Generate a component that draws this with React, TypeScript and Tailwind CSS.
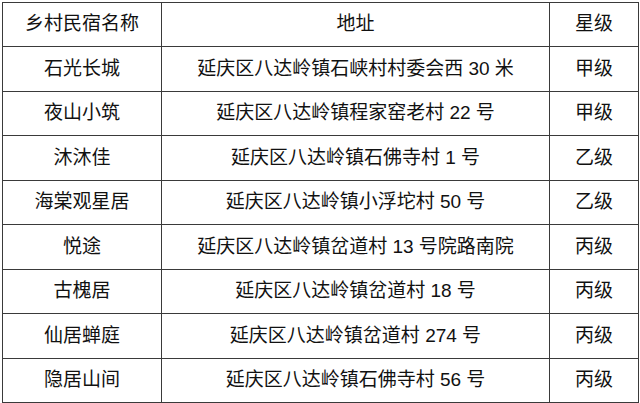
const rows: [string, string, string][] = [
  ["石光长城", "延庆区八达岭镇石峡村村委会西 30 米", "甲级"],
  ["夜山小筑", "延庆区八达岭镇程家窑老村 22 号", "甲级"],
  ["沐沐佳", "延庆区八达岭镇石佛寺村 1 号", "乙级"],
  ["海棠观星居", "延庆区八达岭镇小浮坨村 50 号", "乙级"],
  ["悦途", "延庆区八达岭镇岔道村 13 号院路南院", "丙级"],
  ["古槐居", "延庆区八达岭镇岔道村 18 号", "丙级"],
  ["仙居蝉庭", "延庆区八达岭镇岔道村 274 号", "丙级"],
  ["隐居山间", "延庆区八达岭镇石佛寺村 56 号", "丙级"],
]

const header: [string, string, string] = ["乡村民宿名称", "地址", "星级"]

export default function App() {
  return (
    <div className="h-[403px] w-[640px] bg-white pl-[2px] pt-[2px]">
      <div
        className="grid h-[401px] w-[637px] grid-cols-[158px_387px_88px] grid-rows-[repeat(9,1fr)] gap-px bg-[#3a3a3a] p-px text-[19px] text-[#111]"
        style={{ fontFamily: '"Liberation Sans", "Noto Sans CJK SC", sans-serif' }}
      >
        {[header, ...rows].map((row, i) =>
          row.map((cell, j) => (
            <div key={`${i}-${j}`} className="flex items-center justify-center bg-white">
              {cell}
            </div>
          )),
        )}
      </div>
    </div>
  )
}
